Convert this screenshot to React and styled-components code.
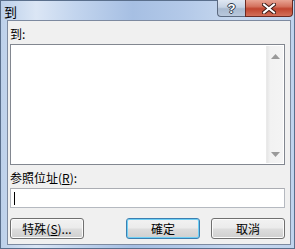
import React from 'react';
import styled, { createGlobalStyle } from 'styled-components';

const GlobalStyle = createGlobalStyle`
	html, body {
		margin: 0;
		padding: 0;
		background: #ffffff;
	}
	body {
		font-family: "Noto Sans CJK TC", "Liberation Sans", sans-serif;
		font-size: 12px;
		color: #000;
	}
`;

const App = () => {
	return (
		<>
			<GlobalStyle />
			<Window>
				<TitleBar>
					<Title>到</Title>
					<CaptionButtons>
						<HelpButton>?</HelpButton>
						<CloseButton>
							<svg width="14" height="11" viewBox="0 0 14 11">
								<path d="M2 1.5 L12 9.5 M12 1.5 L2 9.5" stroke="#3b1a16" strokeWidth="4" strokeLinecap="square" />
								<path d="M2 1.5 L12 9.5 M12 1.5 L2 9.5" stroke="#ffffff" strokeWidth="2" strokeLinecap="square" />
							</svg>
						</CloseButton>
					</CaptionButtons>
				</TitleBar>
				<Client>
					<Label>到:</Label>
					<ListBox>
						<ListArea />
						<ScrollBar>
							<svg width="9" height="5" viewBox="0 0 9 5">
								<path d="M4.5 0 L9 5 L0 5 Z" fill="#9a9a9a" />
							</svg>
							<svg width="9" height="5" viewBox="0 0 9 5">
								<path d="M0 0 L9 0 L4.5 5 Z" fill="#9a9a9a" />
							</svg>
						</ScrollBar>
					</ListBox>
					<Label $top={6}>参照位址(<u>R</u>):</Label>
					<TextInput>
						<Caret />
					</TextInput>
					<ButtonRow>
						<Button>特殊(<u>S</u>)...</Button>
						<ButtonGroup>
							<Button $default>確定</Button>
							<Button>取消</Button>
						</ButtonGroup>
					</ButtonRow>
				</Client>
			</Window>
		</>
	);
};

const Window = styled.div`
	box-sizing: border-box;
	width: 295px;
	height: 249px;
	border: 1px solid #5a6f8c;
	background: linear-gradient(90deg, #bcd0ea 0%, #dbe6f5 12%, #c3d5ee 25%, #a6bfe3 45%, #b3c9e8 62%, #c7d8ef 80%, #c0d3ed 100%);
	display: flex;
	flex-direction: column;
	padding: 0 3px 3px 6px;
`;

const TitleBar = styled.div`
	height: 22px;
	display: flex;
	align-items: flex-start;
	justify-content: space-between;
`;

const Title = styled.div`
	font-size: 13px;
	line-height: 16px;
	margin-left: -3px;
	margin-top: 3px;
	color: #000;
`;

const CaptionButtons = styled.div`
	display: flex;
	margin-top: -1px;
	margin-right: -2px;
`;

const CaptionButton = styled.div`
	box-sizing: border-box;
	height: 17px;
	display: flex;
	align-items: center;
	justify-content: center;
	border: 1px solid #5c6a80;
	border-top: none;
`;

const HelpButton = styled(CaptionButton)`
	width: 28px;
	border-right: none;
	border-radius: 0 0 0 4px;
	background: linear-gradient(180deg, #dfe7f2 0%, #c6d3e4 45%, #a9bad0 55%, #b9c8dc 100%);
	color: #ffffff;
	font-family: "Liberation Sans", sans-serif;
	font-weight: bold;
	font-size: 13px;
	text-shadow: 0 0 1px #2e3a4c, 1px 0 0 #2e3a4c, -1px 0 0 #2e3a4c, 0 1px 0 #2e3a4c, 0 -1px 0 #2e3a4c;
`;

const CloseButton = styled(CaptionButton)`
	width: 48px;
	border-color: #6b2a22;
	border-radius: 0 0 4px 0;
	background: linear-gradient(180deg, #e8a493 0%, #d4735f 40%, #c0452f 55%, #d2705a 100%);
`;

const Client = styled.div`
	flex: 1;
	display: flex;
	flex-direction: column;
	background: #f0f0f0;
	border: 1px solid #7d8aa0;
	padding: 6px 5px 5px 2px;
`;

const Label = styled.div`
	height: 14px;
	line-height: 14px;
	margin-top: ${p => p.$top || 0}px;
	margin-bottom: 3px;
	white-space: nowrap;
	u {
		text-decoration: underline;
		text-underline-offset: 1px;
	}
`;

const ListBox = styled.div`
	box-sizing: border-box;
	height: 121px;
	border: 1px solid #828790;
	background: #ffffff;
	display: flex;
	padding: 1px;
`;

const ListArea = styled.div`
	flex: 1;
`;

const ScrollBar = styled.div`
	width: 16px;
	background: linear-gradient(90deg, #e6e6e6 0%, #f2f2f2 20%, #f4f4f4 100%);
	border-left: 1px solid #eaeaea;
	display: flex;
	flex-direction: column;
	justify-content: space-between;
	align-items: center;
	padding: 8px 0 6px;
`;

const TextInput = styled.div`
	box-sizing: border-box;
	height: 20px;
	border: 1px solid #b5b9c0;
	border-top-color: #abadb3;
	background: #ffffff;
	display: flex;
	align-items: center;
	padding-left: 3px;
`;

const Caret = styled.div`
	width: 1px;
	height: 13px;
	background: #000;
`;

const ButtonRow = styled.div`
	margin-top: 10px;
	display: flex;
	justify-content: space-between;
`;

const ButtonGroup = styled.div`
	display: flex;
	gap: 11px;
`;

const Button = styled.div`
	box-sizing: border-box;
	width: 74px;
	height: 21px;
	border-radius: 3px;
	border: 1px solid ${p => (p.$default ? '#3c7fb1' : '#707070')};
	box-shadow: inset 0 0 0 1px ${p => (p.$default ? '#6fd0f5' : '#fbfbfb')};
	background: linear-gradient(180deg, #f2f2f2 0%, #ebebeb 48%, #dddddd 52%, #cfcfcf 100%);
	display: flex;
	align-items: center;
	justify-content: center;
	line-height: 14px;
	white-space: nowrap;
	u {
		text-decoration: underline;
		text-underline-offset: 1px;
	}
`;

export default App;
